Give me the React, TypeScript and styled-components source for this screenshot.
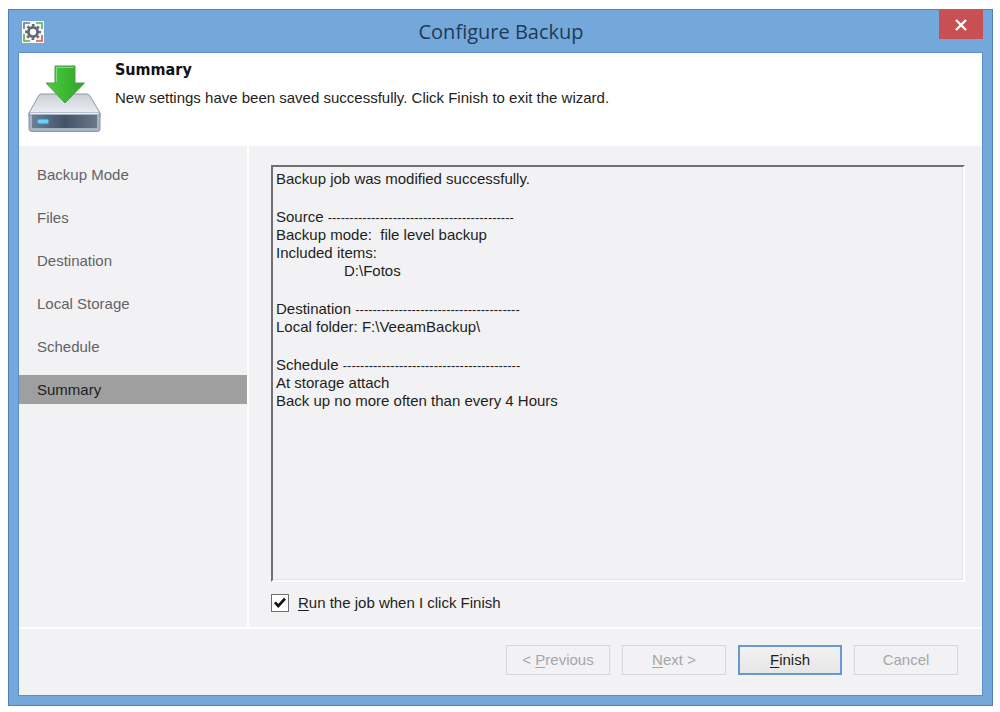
import React, { useState } from "react";
import styled, { createGlobalStyle, css } from "styled-components";

const GlobalStyle = createGlobalStyle`
  * { box-sizing: border-box; }
  body {
    margin: 0;
    background: #ffffff;
    color: #1e1e20;
    font: 15px/18px "Liberation Sans", Arial, sans-serif;
  }
`;

const Desktop = styled.div`
  display: flex;
  min-height: 100vh;
  padding: 9px 7px 6px 8px;
`;

const Dialog = styled.main`
  flex: 1;
  display: flex;
  flex-direction: column;
  padding: 0 10px 10px;
  border: 1px solid #4d80be;
  background: #75a8da;
`;

const TitleBar = styled.header`
  display: grid;
  grid-template-columns: 44px 1fr 44px;
  align-items: center;
  height: 43px;
  margin-right: -1px;
`;

const AppIcon = styled.svg`
  width: 22px;
  height: 22px;
  margin-left: 3px;
`;

const WindowTitle = styled.h1`
  margin: 0;
  text-align: center;
  font: 400 20px/28px "Open Sans", "Noto Sans", sans-serif;
  color: #1f3a56;
`;

const CloseButton = styled.button`
  display: flex;
  align-items: center;
  justify-content: center;
  align-self: start;
  width: 44px;
  height: 29px;
  padding: 0;
  border: 0;
  background: #c85052;
`;

const Surface = styled.div`
  flex: 1;
  display: flex;
  flex-direction: column;
  background: #f2f2f4;
  outline: 1px solid #5c8fca;
`;

const Banner = styled.div`
  display: flex;
  gap: 12px;
  min-height: 93px;
  padding: 7px 8px;
  background: #ffffff;
`;

const DriveIcon = styled.svg`
  flex: none;
  width: 76px;
  height: 76px;
`;

const Heading = styled.h2`
  margin: 0 0 9px;
  font: 700 16px/20px "DejaVu Sans Condensed", "DejaVu Sans", sans-serif;
  color: #111111;
`;

const Lead = styled.p`
  margin: 0;
`;

const Body = styled.div`
  flex: 1;
  display: grid;
  grid-template-columns: 230px 1fr;
`;

const Steps = styled.nav`
  display: flex;
  flex-direction: column;
  gap: 14px;
  padding-top: 14px;
  border-right: 2px solid #ffffff;
`;

const Step = styled.button<{ $current?: boolean }>`
  height: 29px;
  padding: 0 18px;
  border: 0;
  background: ${(p) => (p.$current ? "#9f9f9f" : "transparent")};
  color: ${(p) => (p.$current ? "#1e1e20" : "#636366")};
  font: inherit;
  text-align: left;
`;

const Page = styled.section`
  display: flex;
  flex-direction: column;
  gap: 11px;
  padding: 19px 17px 14px 22px;
`;

const Report = styled.div`
  flex: 1;
  padding: 3px;
  border: 2px solid;
  border-color: #707072 #ffffff #ffffff #707072;
  box-shadow: inset -1px -1px #e2e2e4;
`;

const ReportBlock = styled.div`
  margin-bottom: 20px;
`;

const ReportLine = styled.p<{ $indent?: boolean }>`
  margin: 0;
  padding-left: ${(p) => (p.$indent ? "68px" : "0")};
  white-space: pre-wrap;
`;

const Dashes = styled.span`
  font-size: 13px;
  line-height: 1;
`;

const CheckRow = styled.label`
  display: flex;
  align-items: center;
  gap: 9px;
  height: 20px;
`;

const CheckBox = styled.input`
  appearance: none;
  width: 18px;
  height: 18px;
  margin: 0;
  border: 1px solid #6e6e70;
  background: #ffffff;

  &:checked {
    background: #ffffff
      url("data:image/svg+xml,%3Csvg xmlns='http://www.w3.org/2000/svg' viewBox='0 0 16 16'%3E%3Cpath d='M3 7.4 6.3 11 13 3.6' fill='none' stroke='%23111' stroke-width='2.7'/%3E%3C/svg%3E")
      center / 16px 16px no-repeat;
  }
`;

const Footer = styled.footer`
  display: flex;
  justify-content: flex-end;
  gap: 12px;
  padding: 16px 24px 20px;
  border-top: 2px solid #ffffff;
`;

const WizardButton = styled.button`
  width: 104px;
  height: 30px;
  padding: 0;
  border: 1px solid #d6d6d8;
  background: #f2f2f4;
  color: #a6a6a9;
  font: inherit;

  ${(p) =>
    !p.disabled &&
    css`
      border: 2px solid #6699d4;
      background: linear-gradient(#f2f2f3, #e6e6e8);
      color: #1e1e20;
    `}
`;

const Key = styled.u`
  text-underline-offset: 2px;
`;

const STEPS = ["Backup Mode", "Files", "Destination", "Local Storage", "Schedule", "Summary"];

type Block = { title?: string; dashes?: number; lines: string[] };

const REPORT: Block[] = [
  { lines: ["Backup job was modified successfully."] },
  {
    title: "Source",
    dashes: 43,
    lines: ["Backup mode:  file level backup", "Included items:", "\tD:\\Fotos"],
  },
  { title: "Destination", dashes: 38, lines: ["Local folder: F:\\VeeamBackup\\"] },
  {
    title: "Schedule",
    dashes: 41,
    lines: ["At storage attach", "Back up no more often than every 4 Hours"],
  },
];

function GearIcon() {
  return (
    <AppIcon viewBox="0 0 22 22" aria-hidden="true">
      <rect width="22" height="22" fill="#f6f8fa" />
      <g fill="none" strokeWidth="1.6">
        <path d="M2 8V2H8" stroke="#5c7a9a" />
        <path d="M14 2H20V8" stroke="#58b04c" />
        <path d="M2 13V20H8" stroke="#58b04c" />
        <path d="M20 14V20H14" stroke="#dd5148" />
      </g>
      <circle cx="11" cy="11" r="4.6" fill="#f6f8fa" stroke="#62676d" strokeWidth="2.8" />
      <circle
        cx="11"
        cy="11"
        r="6.8"
        fill="none"
        stroke="#62676d"
        strokeWidth="2.2"
        strokeDasharray="2.7 2.641"
        strokeDashoffset="1.35"
      />
    </AppIcon>
  );
}

function BackupDrive() {
  return (
    <DriveIcon viewBox="0 0 76 76" aria-hidden="true">
      <defs>
        <linearGradient id="lid" x1="0" y1="0" x2="0" y2="1">
          <stop offset="0" stopColor="#c9ced6" />
          <stop offset="1" stopColor="#f3f5fa" />
        </linearGradient>
        <linearGradient id="face" x1="0" y1="0" x2="1" y2="0">
          <stop offset="0" stopColor="#6e7f94" />
          <stop offset="0.5" stopColor="#44536a" />
          <stop offset="1" stopColor="#6b7787" />
        </linearGradient>
        <linearGradient id="arrow" x1="0" y1="0" x2="1" y2="0">
          <stop offset="0" stopColor="#5cc44e" />
          <stop offset="0.4" stopColor="#3fbd35" />
          <stop offset="1" stopColor="#31a329" />
        </linearGradient>
      </defs>
      <path d="M14 34H60Q62 34 63 36L73 53V57H2V53L11.500 36Q12.500 34 14 34Z" fill="url(#lid)" stroke="#8e96a2" />
      <path d="M2 53H73V69Q73 71.500 70.500 71.500H5Q2 71.500 2 69Z" fill="#a5b3c5" stroke="#8794a6" />
      <rect x="5" y="55" width="65" height="13" fill="url(#face)" />
      <path d="M3 53.500H72" stroke="#edf1f6" />
      <rect x="10" y="59" width="12" height="5" rx="2" fill="#6fd0f5" stroke="#3b86b5" />
      <path
        d="M28 6H48V23H57.500L38 43 19 23H28Z"
        fill="url(#arrow)"
        stroke="#4d9f48"
        strokeLinejoin="round"
      />
      <path d="M29.500 22V7.500H46.500" fill="none" stroke="#8bdc80" />
    </DriveIcon>
  );
}

export default function App() {
  const [runNow, setRunNow] = useState(true);

  return (
    <>
      <GlobalStyle />
      <Desktop>
        <Dialog>
          <TitleBar>
            <GearIcon />
            <WindowTitle>Configure Backup</WindowTitle>
            <CloseButton aria-label="Close">
              <svg width="14" height="12" viewBox="0 0 14 12" aria-hidden="true">
                <path d="M2 1 12 11M12 1 2 11" stroke="#ffffff" strokeWidth="2.4" />
              </svg>
            </CloseButton>
          </TitleBar>
          <Surface>
            <Banner>
              <BackupDrive />
              <div>
                <Heading>Summary</Heading>
                <Lead>New settings have been saved successfully. Click Finish to exit the wizard.</Lead>
              </div>
            </Banner>
            <Body>
              <Steps aria-label="Wizard steps">
                {STEPS.map((step) => (
                  <Step
                    key={step}
                    $current={step === "Summary"}
                    aria-current={step === "Summary" ? "step" : undefined}
                  >
                    {step}
                  </Step>
                ))}
              </Steps>
              <Page>
                <Report>
                  {REPORT.map((block, i) => (
                    <ReportBlock key={i}>
                      {block.title && (
                        <ReportLine>
                          {block.title} <Dashes>{"-".repeat(block.dashes ?? 0)}</Dashes>
                        </ReportLine>
                      )}
                      {block.lines.map((line) => (
                        <ReportLine key={line} $indent={line.startsWith("\t")}>
                          {line.trim()}
                        </ReportLine>
                      ))}
                    </ReportBlock>
                  ))}
                </Report>
                <CheckRow>
                  <CheckBox
                    type="checkbox"
                    checked={runNow}
                    onChange={(e) => setRunNow(e.target.checked)}
                  />
                  <span>
                    <Key>R</Key>un the job when I click Finish
                  </span>
                </CheckRow>
              </Page>
            </Body>
            <Footer>
              <WizardButton disabled>
                &lt; <Key>P</Key>revious
              </WizardButton>
              <WizardButton disabled>
                <Key>N</Key>ext &gt;
              </WizardButton>
              <WizardButton>
                <Key>F</Key>inish
              </WizardButton>
              <WizardButton disabled>Cancel</WizardButton>
            </Footer>
          </Surface>
        </Dialog>
      </Desktop>
    </>
  );
}
